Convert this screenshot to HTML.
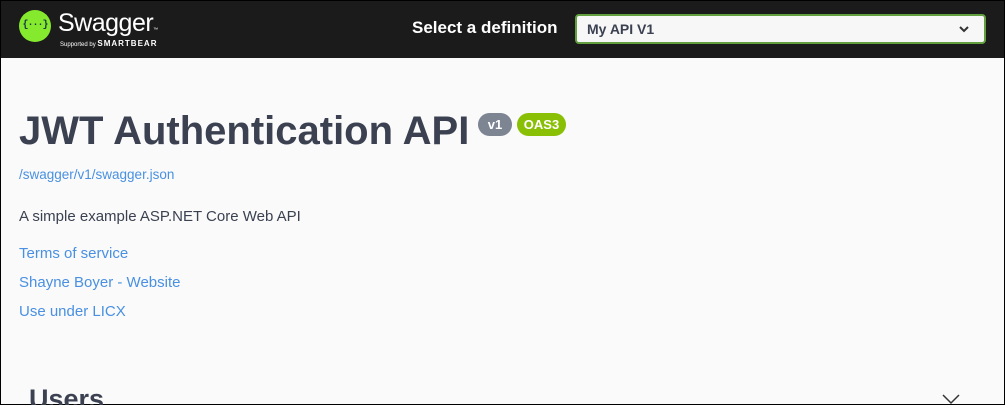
<!DOCTYPE html>
<html><head><style>
*{margin:0;padding:0;box-sizing:border-box}
html,body{width:1005px;height:405px;overflow:hidden}
body{font-family:"Liberation Sans",sans-serif;background:#fafafa;border:1px solid #000;position:relative}
.top{position:absolute;left:0;top:0;width:1003px;height:57px;background:#1b1b1b}
.logo{position:absolute;left:18px;top:9px;width:32px;height:32px;border-radius:50%;background:#85ea2d;color:#173647;font:bold 10px "Liberation Mono",monospace;text-align:center;line-height:32px;letter-spacing:-1px}
.sw{position:absolute;left:57px;top:8px;color:#fff;font-size:25px;letter-spacing:-0.5px}
.sup{position:absolute;left:59px;top:38px;color:#fff;font-size:6px}
.sup b{font-size:8px;letter-spacing:1px}
.lbl{position:absolute;left:411px;top:17px;color:#fff;font-weight:bold;font-size:17px}
.sel{position:absolute;left:574px;top:13px;width:411px;height:30px;border:2px solid #62a03f;border-radius:4px;background:#f7f7f7;color:#3b4151;font-weight:bold;font-size:14px;padding:5px 10px}
.chev{position:absolute;right:14px;top:9px}
h1{position:absolute;left:18px;top:108px;font-size:40px;color:#3b4151;font-weight:bold;white-space:nowrap}
.badge{position:absolute;top:112px;height:23px;border-radius:12px;color:#fff;font-weight:bold;font-size:13px;line-height:23px;text-align:center}
a{color:#4990e2;text-decoration:none;position:absolute;left:18px;white-space:nowrap}
.desc{position:absolute;left:18px;top:207px;font-size:15px;color:#3b4151}
.users{position:absolute;left:28px;top:383px;font-size:27px;color:#3b4151;font-weight:bold}
</style></head><body>
<div class="top">
<div class="logo">{···}</div>
<div class="sw">Swagger<span style="font-size:5px">™</span></div>
<div class="sup">Supported by <b>SMARTBEAR</b></div>
<div class="lbl">Select a definition</div>
<div class="sel">My API V1<svg class="chev" width="12" height="8" viewBox="0 0 12 8"><path d="M2 2l4 4 4-4" stroke="#333" stroke-width="2" fill="none"/></svg></div>
</div>
<h1>JWT Authentication API</h1>
<div class="badge" style="left:477px;width:34px;background:#7d8492">v1</div>
<div class="badge" style="left:516px;width:49px;background:#89bf04">OAS3</div>
<a style="top:166px;font-size:13.5px">/swagger/v1/swagger.json</a>
<div class="desc">A simple example ASP.NET Core Web API</div>
<a style="top:244px;font-size:15px">Terms of service</a>
<a style="top:273px;font-size:15px">Shayne Boyer - Website</a>
<a style="top:302px;font-size:15px">Use under LICX</a>
<div class="users">Users</div>
<svg style="position:absolute;left:940px;top:392px" width="20" height="12" viewBox="0 0 20 12"><path d="M2 2l8 8 8-8" stroke="#333" stroke-width="1.5" fill="none"/></svg>
</body></html>
